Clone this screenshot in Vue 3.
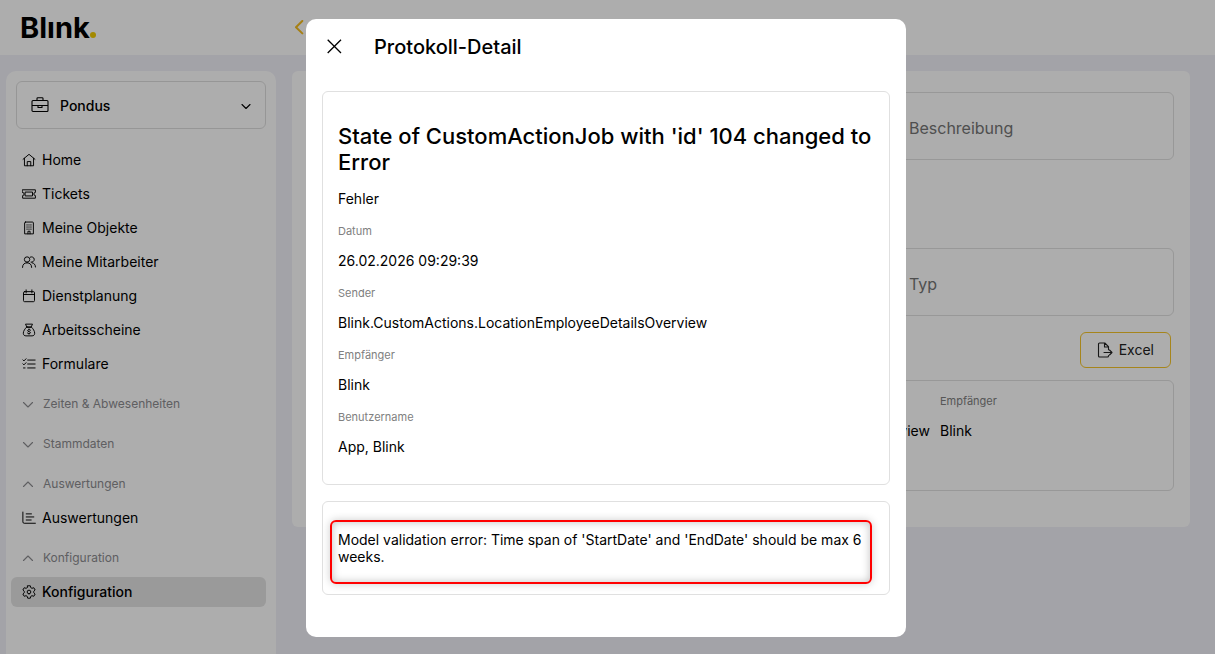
<script setup>
import { ref } from 'vue'

const tenant = ref('Pondus')
const description = ref('')
const type = ref('')
const modalOpen = ref(true)

const icons = {
  home: ['M1.200 7.200 8 1.500l6.800 5.700', 'M2.800 6v8.600h10.400V6', 'M6 14.600V9.800h4v4.800'],
  ticket: ['M.7 3.200h14.600v3a1.800 1.800 0 0 0 0 3.600v3H.7v-3a1.800 1.800 0 0 0 0-3.600z', 'M4 5.800h8v4.400H4z'],
  building: ['M4 1.200h8a1 1 0 0 1 1 1v12.500H3V2.200a1 1 0 0 1 1-1z', 'M6.800 14.700v-3h2.400v3', 'M5.500 4.500h.6M9.900 4.500h.6M7.700 4.500h.6M5.500 6.900h.6M7.700 6.900h.6M9.900 6.900h.6M5.500 9.300h.6M7.700 9.300h.6M9.900 9.300h.6'],
  people: ['M5.800 8.300a3.100 3.100 0 1 0 0-6.200 3.100 3.100 0 0 0 0 6.200z', 'M.6 14.200c0-3.500 2-5.200 5.200-5.200s5.200 1.700 5.200 5.200', 'M9.500 2.400a3.100 3.100 0 1 1 .8 5.800', 'M11.500 8.900c2.300.3 3.800 2 3.900 4.800'],
  calendar: ['M3 3h10a1.300 1.300 0 0 1 1.300 1.300v8.900a1.300 1.300 0 0 1-1.300 1.300H3a1.300 1.300 0 0 1-1.300-1.300V4.300A1.300 1.300 0 0 1 3 3z', 'M1.700 6.300h12.600M4.700 1v3.500M11.300 1v3.500'],
  money: ['M5.500 4.500 4 1.300h8l-1.500 3.200z', 'M5.500 4.500h5c2.200 2 4 4.800 4 7.200 0 2-1.200 3-3 3h-7c-1.800 0-3-1-3-3 0-2.400 1.800-5.200 4-7.200z', 'M9.800 8.200c-.8-.8-3.400-.8-3.400.6 0 1.500 3.300.7 3.300 2.200 0 1.300-2.600 1.400-3.500.5M8 6.800v.8M8 12v.8'],
  checklist: ['M6.500 3.500H15M6.500 8H15M6.500 12.500H15', 'm1 3.300 1.200 1.200L4.600 2M1 7.800 2.200 9l2.400-2.500M1.700 12.500h1.800'],
  chart: ['M1 1.200v11.300A1.500 1.500 0 0 0 2.500 14h12.800', 'M4.800 3.300h6M4.800 6.800h8.700M4.800 10.300h5.700'],
  gear: ['M6.500.9h3l.5 2.100 1.400.8 2.100-.7L15 5.700l-1.600 1.500v1.600l1.600 1.500-1.500 2.600-2.100-.7-1.400.8-.5 2.100h-3L6 13l-1.400-.8-2.100.7L1 10.300l1.600-1.500V7.200L1 5.700l1.500-2.600 2.100.7L6 3z', 'M8 10.100a2.100 2.100 0 1 0 0-4.200 2.100 2.100 0 0 0 0 4.200z']
}

const nav = [
  { text: 'Home', icon: 'home' },
  { text: 'Tickets', icon: 'ticket' },
  { text: 'Meine Objekte', icon: 'building' },
  { text: 'Meine Mitarbeiter', icon: 'people' },
  { text: 'Dienstplanung', icon: 'calendar' },
  { text: 'Arbeitsscheine', icon: 'money' },
  { text: 'Formulare', icon: 'checklist' },
  { text: 'Zeiten & Abwesenheiten', group: true, open: false },
  { text: 'Stammdaten', group: true, open: false },
  { text: 'Auswertungen', group: true, open: true },
  { text: 'Auswertungen', icon: 'chart' },
  { text: 'Konfiguration', group: true, open: true },
  { text: 'Konfiguration', icon: 'gear', active: true }
]

const details = [
  ['Datum', '26.02.2026 09:29:39'],
  ['Sender', 'Blink.CustomActions.LocationEmployeeDetailsOverview'],
  ['Empfänger', 'Blink'],
  ['Benutzername', 'App, Blink']
]
</script>

<template>
  <div class="app">
    <header class="topbar">
      <a class="logo" href="#"><span>Blınk</span><i class="logo-dot"></i></a>
      <button class="back" type="button" aria-label="Zurück">
        <svg width="10" height="16" viewBox="0 0 10 16"><path d="M8.300 1 2 7.200l6.300 6.200" /></svg>
      </button>
    </header>

    <div class="body">
      <aside class="sidebar">
        <div class="tenant">
          <svg class="tenant-icon" width="18" height="18" viewBox="0 0 18 18">
            <path d="M2 4.500h14a1 1 0 0 1 1 1v9a1 1 0 0 1-1 1H2a1 1 0 0 1-1-1v-9a1 1 0 0 1 1-1zM6 4.500v-2a.8.8 0 0 1 .8-.8h4.400a.8.8 0 0 1 .8.8v2M1 9.500h16M7 9.500v2h4v-2" />
          </svg>
          <select v-model="tenant" aria-label="Mandant">
            <option>Pondus</option>
          </select>
          <svg class="tenant-arrow" width="12" height="12" viewBox="0 0 12 12"><path d="M2 5.500 6 9.500l4-4" /></svg>
        </div>

        <nav class="nav">
          <template v-for="(item, i) in nav" :key="i">
            <button v-if="item.group" class="group" type="button" :aria-expanded="item.open">
              <svg width="12" height="12" viewBox="0 0 12 12">
                <path :d="item.open ? 'm1.500 8.500 4.500-4.500 4.500 4.500' : 'm1.500 4.500 4.500 4.500 4.500-4.500'" />
              </svg>
              {{ item.text }}
            </button>
            <a v-else class="item" :class="{ active: item.active }" href="#">
              <svg width="14" height="14" viewBox="0 0 16 16">
                <path v-for="d in icons[item.icon]" :key="d" :d="d" />
              </svg>
              {{ item.text }}
            </a>
          </template>
        </nav>
      </aside>

      <main class="panel">
        <div class="filters">
          <input v-model="description" class="field" type="text" placeholder="Beschreibung" aria-label="Beschreibung" />
          <input v-model="type" class="field" type="text" placeholder="Typ" aria-label="Typ" />
        </div>
        <div class="actions">
          <button class="export" type="button">
            <svg width="16" height="16" viewBox="0 0 16 16">
              <path d="M11.500 13.500v.5a1 1 0 0 1-1 1h-8a1 1 0 0 1-1-1V2a1 1 0 0 1 1-1h5.300l3.700 3.700v3M7.500 1v4h4M7 10.500h8M12.500 8l2.500 2.500-2.500 2.500" />
            </svg>
            Excel
          </button>
        </div>
        <article class="entry">
          <div class="entry-sender">Blink.CustomActions.LocationEmployeeDetailsOverview</div>
          <dl class="entry-receiver">
            <dt>Empfänger</dt>
            <dd>Blink</dd>
          </dl>
        </article>
      </main>
    </div>

    <div v-if="modalOpen" class="overlay">
      <section class="modal" role="dialog" aria-modal="true" aria-labelledby="modal-title">
        <header class="modal-head">
          <button class="close" type="button" aria-label="Schließen" @click="modalOpen = false">
            <svg width="16" height="16" viewBox="0 0 16 16"><path d="m1.700.7 13.300 13.300M15 .7 1.700 14" /></svg>
          </button>
          <h1 id="modal-title">Protokoll-Detail</h1>
        </header>
        <div class="modal-body">
          <div class="card">
            <h2>State of CustomActionJob with 'id' 104 changed to Error</h2>
            <p class="status">Fehler</p>
            <dl>
              <template v-for="[label, value] in details" :key="label">
                <dt>{{ label }}</dt>
                <dd>{{ value }}</dd>
              </template>
            </dl>
          </div>
          <div class="card message-card">
            <p class="message">Model validation error: Time span of 'StartDate' and 'EndDate' should be max 6 weeks.</p>
          </div>
        </div>
      </section>
    </div>
  </div>
</template>

<style>
body {
  background: #f1f0f8;
}
</style>

<style scoped>
.app,
.app * {
  box-sizing: border-box;
}
.app {
  display: flex;
  flex-direction: column;
  height: 100vh;
  overflow: hidden;
  font-family: Inter, "Liberation Sans", sans-serif;
  font-size: 14px;
  line-height: 18px;
  color: #000;
}
button,
input,
select {
  font: inherit;
  color: inherit;
}
button {
  padding: 0;
  border: 0;
  background: none;
  cursor: pointer;
}
a {
  color: inherit;
  text-decoration: none;
}
h1,
h2,
p,
dl,
dd {
  margin: 0;
}
svg {
  flex: none;
  fill: none;
  stroke: currentColor;
  stroke-width: 1.1;
  stroke-linecap: round;
  stroke-linejoin: round;
}

.topbar {
  display: flex;
  align-items: center;
  flex: none;
  height: 55px;
  padding-left: 20px;
  background: #fff;
}
.logo {
  display: flex;
  align-items: baseline;
  width: 274px;
  font-size: 29px;
  font-weight: 700;
  line-height: 32px;
}
.logo-dot {
  width: 6px;
  height: 6px;
  border-radius: 50%;
  background: #f0cb00;
}
.back {
  display: flex;
  color: #f5bd1f;
}
.back svg {
  stroke-width: 2;
}

.body {
  display: flex;
  align-items: flex-start;
  flex: 1;
  gap: 16px;
  min-height: 0;
  padding: 16px 25px 0 6px;
}
.sidebar {
  align-self: stretch;
  flex: none;
  width: 270px;
  padding: 10px 10px 0 5px;
  border-radius: 10px 10px 0 0;
  background: #fff;
}
.tenant {
  display: flex;
  align-items: center;
  height: 48px;
  margin-left: 5px;
  padding: 0 13px 0 14px;
  border: 1px solid #dedede;
  border-radius: 6px;
}
.tenant select {
  flex: 1;
  margin-left: 11px;
  padding: 2px 0 0;
  border: 0;
  background: none;
  appearance: none;
  font-weight: 500;
}
.nav {
  display: flex;
  flex-direction: column;
  gap: 4px;
  margin-top: 16px;
}
.item,
.group {
  display: flex;
  align-items: center;
  height: 30px;
  padding-left: 11px;
  border-radius: 6px;
}
.item {
  gap: 6px;
}
.item.active {
  background: #e4e4e4;
  font-weight: 500;
}
.group {
  gap: 9px;
  margin-top: 6px;
  font-size: 12px;
  color: #8c8c90;
}

.panel {
  flex: 1;
  min-width: 0;
  padding: 21px 16px 36px;
  border-radius: 6px;
  background: #fff;
}
.filters {
  display: grid;
  grid-template-columns: repeat(3, 1fr);
  row-gap: 88px;
  column-gap: 16px;
}
.field {
  grid-column: 3;
  width: 100%;
  height: 68px;
  padding: 4px 12px 0;
  border: 1px solid #e0e0e0;
  border-radius: 6px;
  background: none;
  font-size: 16px;
}
.field::placeholder {
  color: #757575;
  opacity: 1;
}
.actions {
  display: flex;
  justify-content: flex-end;
  padding: 16px 3px 12px;
}
.export {
  display: flex;
  align-items: center;
  gap: 6px;
  height: 36px;
  padding: 0 16px;
  border: 1px solid #f5c52a;
  border-radius: 6px;
  color: #222;
}
.entry {
  display: grid;
  grid-template-columns: 1fr 218px;
  column-gap: 10px;
  min-height: 111px;
  padding: 13px 15px 0;
  border: 1px solid #e0e0e0;
  border-radius: 6px;
}
.entry-sender {
  padding-top: 28px;
  text-align: right;
}
dt {
  margin-bottom: 14px;
  font-size: 11px;
  line-height: 14px;
  color: #808080;
}

.overlay {
  position: fixed;
  inset: 0;
  display: flex;
  align-items: center;
  justify-content: center;
  padding: 2px 3px 0 0;
  background: rgba(0, 0, 0, 0.32);
}
.modal {
  width: 600px;
  border-radius: 10px;
  background: #fff;
}
.modal-head {
  display: flex;
  align-items: center;
  gap: 32px;
  height: 56px;
  padding-left: 20px;
}
.close {
  display: flex;
}
.close svg {
  stroke-linecap: butt;
  stroke-width: 1.3;
}
h1 {
  font-size: 20px;
  font-weight: 500;
  line-height: 26px;
}
.modal-body {
  display: flex;
  flex-direction: column;
  gap: 16px;
  padding: 16px 16px 42px;
}
.card {
  padding: 31px 15px 28px;
  border: 1px solid #e0e0e0;
  border-radius: 6px;
}
h2 {
  margin-bottom: 15px;
  font-size: 22px;
  font-weight: 500;
  line-height: 26px;
}
.status {
  margin-bottom: 16px;
}
.card dd + dt {
  margin-top: 16px;
}
.message-card {
  padding: 18px 17px 10px 7px;
}
.message {
  padding: 9px 6px 17px;
  border: 2px solid #f00;
  border-radius: 6px;
  box-shadow: 0 0 8px rgba(0, 0, 0, 0.2), inset 0 0 8px rgba(0, 0, 0, 0.25);
  line-height: 17px;
}
</style>
